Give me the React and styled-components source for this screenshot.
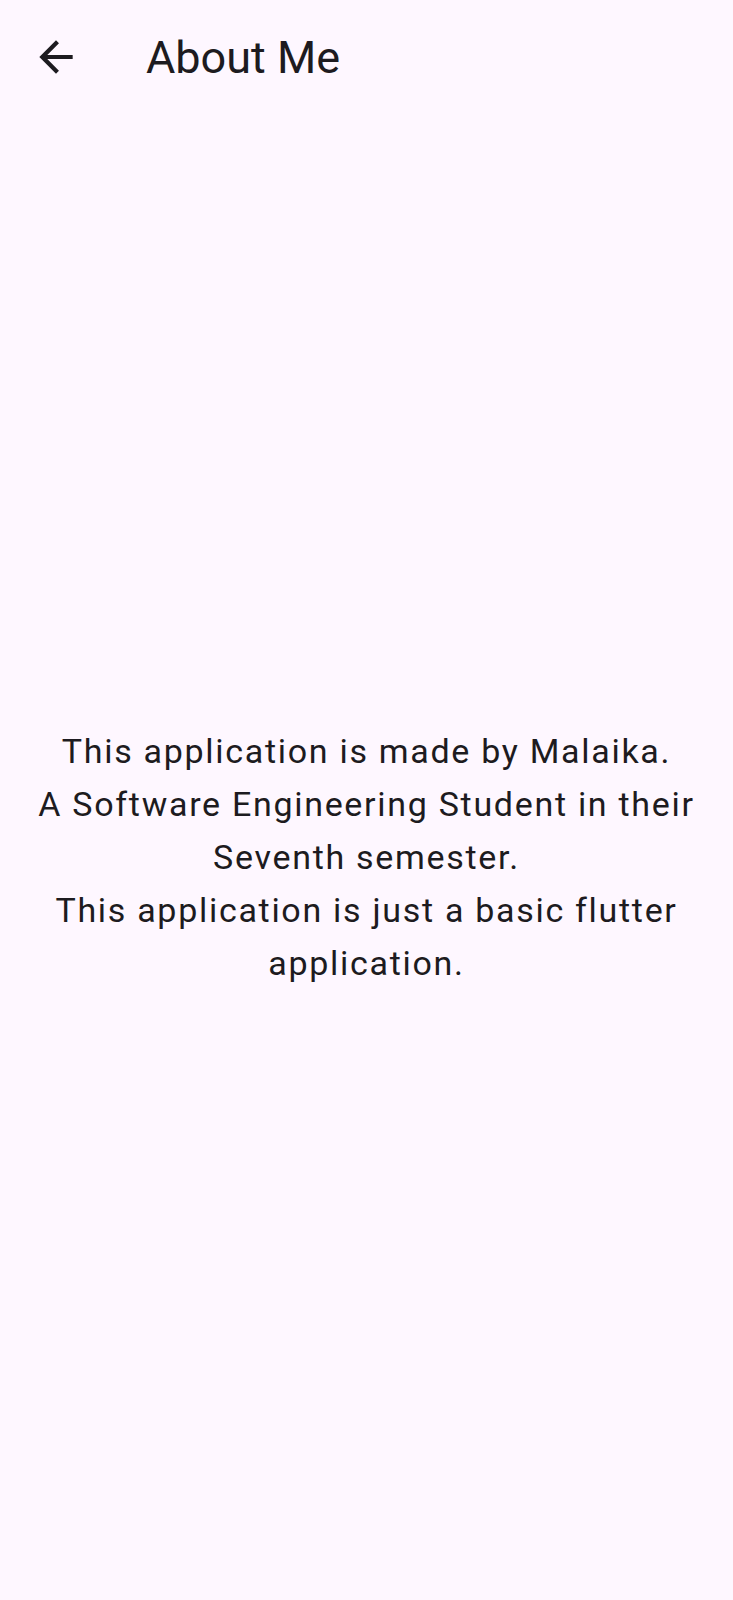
import React from 'react';
import styled, { createGlobalStyle } from 'styled-components';

// Colores tipo Material 3 (surface / onSurface)
const surface = '#FEF7FF';
const onSurface = '#1D1B20';

const GlobalStyle = createGlobalStyle`
    html, body {
        margin: 0;
        padding: 0;
        background: ${surface};
    }
    body {
        font-family: Roboto, "Noto Sans", "Liberation Sans", sans-serif;
        color: ${onSurface};
    }
`

const Screen = styled.div`
    display: flex;
    flex-direction: column;
    min-height: 100vh;
    background: ${surface};
`

const AppBar = styled.header`
    display: flex;
    align-items: center;
    height: 114px;
    padding-left: 31px;
    flex-shrink: 0;
`

const BackButton = styled.button`
    display: flex;
    align-items: center;
    justify-content: center;
    width: 50px;
    height: 50px;
    padding: 0;
    border: none;
    background: transparent;
    color: ${onSurface};
    cursor: pointer;
`

const Title = styled.h1`
    margin: 0 0 0 65px;
    font-size: 45px;
    font-weight: 400;
    line-height: 45px;
    color: ${onSurface};
`

const Body = styled.main`
    flex: 1;
    display: flex;
    align-items: center;
    justify-content: center;
    padding: 0 30px;
`

// bodyLarge: tracking abierto como en Flutter
const Paragraph = styled.p`
    margin: 0;
    font-size: 34px;
    line-height: 53px;
    letter-spacing: 1.7px;
    text-align: center;
    white-space: pre-line;
    color: ${onSurface};
`

// Flecha "arrow_back" de Material
const ArrowBack = () => (
    <svg width="50" height="50" viewBox="0 0 24 24" fill="currentColor">
        <path d="M20 11H7.83l5.59-5.59L12 4l-8 8 8 8 1.41-1.41L7.83 13H20v-2z" />
    </svg>
)

const aboutText = `This application is made by Malaika.
A Software Engineering Student in their Seventh semester.
This application is just a basic flutter application.`

const App = () => {
    return (
        <>
            <GlobalStyle />
            <Screen>
                <AppBar>
                    <BackButton aria-label="Back">
                        <ArrowBack />
                    </BackButton>
                    <Title>About Me</Title>
                </AppBar>
                <Body>
                    <Paragraph>{aboutText}</Paragraph>
                </Body>
            </Screen>
        </>
    );
};

export default App;
